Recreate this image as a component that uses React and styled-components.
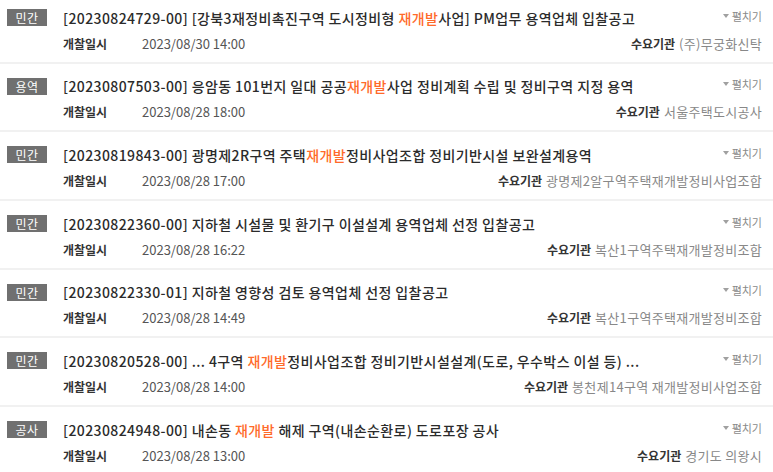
import React from "react";
import styled, { createGlobalStyle } from "styled-components";

const Global = createGlobalStyle`
  html, body { margin: 0; padding: 0; background: #fff; }
  body { font-family: "Noto Sans CJK KR", "Noto Sans", sans-serif; overflow: hidden; }
`;

const List = styled.ul`
  list-style: none;
  margin: -5px 0 0 0;
  padding: 0;
`;

const Row = styled.li`
  padding: 14px 11px 8.7px 7px;
  border-bottom: 2px solid #f1f1f1;
`;

const TopLine = styled.div`
  display: flex;
  align-items: center;
  height: 17px;
`;

const Badge = styled.span`
  flex: 0 0 40px;
  height: 17px;
  background: #707070;
  color: #fff;
  font-size: 12px;
  line-height: 17px;
  text-align: center;
  letter-spacing: 0.5px;
`;

const Title = styled.div`
  flex: 1;
  margin-left: 16px;
  font-size: 14px;
  font-weight: 500;
  letter-spacing: 0.4px;
  color: #2b2b2b;
  white-space: nowrap;
  overflow: hidden;
  line-height: 20px;
`;

const Hl = styled.span`
  color: #ff6a2a;
`;

const Toggle = styled.span`
  display: flex;
  align-items: center;
  gap: 3px;
  font-size: 11px;
  color: #8a8a8a;
  margin-top: -4px;
  white-space: nowrap;
`;

const Caret = styled.span`
  display: inline-block;
  width: 0;
  height: 0;
  border-left: 3px solid transparent;
  border-right: 3px solid transparent;
  border-top: 4px solid #a0a0a0;
`;

const MetaLine = styled.div`
  display: flex;
  align-items: center;
  height: 20px;
  margin-top: 7px;
  padding-left: 56px;
`;

const Label = styled.span`
  font-size: 12px;
  font-weight: 700;
  color: #333;
  width: 79px;
`;

const DateText = styled.span`
  font-size: 13px;
  color: #555;
  flex: 1;
`;

const OrgLabel = styled.span`
  font-size: 12px;
  font-weight: 700;
  color: #333;
  margin-right: 4px;
`;

const OrgValue = styled.span`
  font-size: 13px;
  letter-spacing: 0.3px;
  color: #888;
`;

const items = [
  { type: "민간", title: ["[20230824729-00] [강북3재정비촉진구역 도시정비형 ", "재개발", "사업] PM업무 용역업체 입찰공고"], date: "2023/08/30 14:00", org: "(주)무궁화신탁" },
  { type: "용역", title: ["[20230807503-00] 응암동 101번지 일대 공공", "재개발", "사업 정비계획 수립 및 정비구역 지정 용역"], date: "2023/08/28 18:00", org: "서울주택도시공사" },
  { type: "민간", title: ["[20230819843-00] 광명제2R구역 주택", "재개발", "정비사업조합 정비기반시설 보완설계용역"], date: "2023/08/28 17:00", org: "광명제2알구역주택재개발정비사업조합" },
  { type: "민간", title: ["[20230822360-00] 지하철 시설물 및 환기구 이설설계 용역업체 선정 입찰공고"], date: "2023/08/28 16:22", org: "복산1구역주택재개발정비조합" },
  { type: "민간", title: ["[20230822330-01] 지하철 영향성 검토 용역업체 선정 입찰공고"], date: "2023/08/28 14:49", org: "복산1구역주택재개발정비조합" },
  { type: "민간", title: ["[20230820528-00] ... 4구역 ", "재개발", "정비사업조합 정비기반시설설계(도로, 우수박스 이설 등) ..."], date: "2023/08/28 14:00", org: "봉천제14구역 재개발정비사업조합" },
  { type: "공사", title: ["[20230824948-00] 내손동 ", "재개발", " 해제 구역(내손순환로) 도로포장 공사"], date: "2023/08/28 13:00", org: "경기도 의왕시" },
];

export default function App() {
  return (
    <>
      <Global />
      <List>
        {items.map((it, i) => (
          <Row key={i}>
            <TopLine>
              <Badge>{it.type}</Badge>
              <Title>
                {it.title.map((t, j) => (j === 1 ? <Hl key={j}>{t}</Hl> : <React.Fragment key={j}>{t}</React.Fragment>))}
              </Title>
              <Toggle>
                <Caret />
                펼치기
              </Toggle>
            </TopLine>
            <MetaLine>
              <Label>개찰일시</Label>
              <DateText>{it.date}</DateText>
              <OrgLabel>수요기관</OrgLabel>
              <OrgValue>{it.org}</OrgValue>
            </MetaLine>
          </Row>
        ))}
      </List>
    </>
  );
}
